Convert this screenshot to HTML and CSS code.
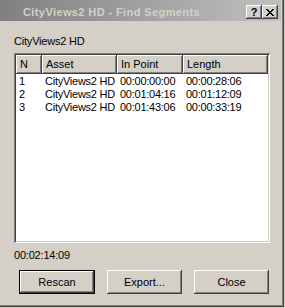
FILE: index.html
```html
<!DOCTYPE html>
<html lang="en">
<head>
  <meta charset="UTF-8" />
  <title>CityViews2 HD - Find Segments</title>
  <link rel="stylesheet" href="styles.css">
</head>
<body>
  <div class="window">
    <div class="titlebar">
      <span class="title">CityViews2 HD - Find Segments</span>
      <div class="caption-btns">
        <div class="cap-btn help">?</div>
        <div class="cap-btn">
          <svg width="8" height="7" viewBox="0 0 8 7"><path d="M0 0h2v1h-2zM6 0h2v1h-2zM1 1h2v1h-2zM5 1h2v1h-2zM2 2h4v1h-4zM3 3h2v1h-2zM2 4h4v1h-4zM1 5h2v1h-2zM5 5h2v1h-2zM0 6h2v1h-2zM6 6h2v1h-2z" fill="#000"/></svg>
        </div>
      </div>
    </div>

    <div class="content">
      <div class="label">CityViews2 HD</div>

      <div class="listview">
        <div class="row header">
          <div class="col c-n">N</div>
          <div class="col c-asset">Asset</div>
          <div class="col c-in">In Point</div>
          <div class="col c-len">Length</div>
        </div>
        <div class="row">
          <div class="col c-n">1</div>
          <div class="col c-asset">CityViews2 HD</div>
          <div class="col c-in">00:00:00:00</div>
          <div class="col c-len">00:00:28:06</div>
        </div>
        <div class="row">
          <div class="col c-n">2</div>
          <div class="col c-asset">CityViews2 HD</div>
          <div class="col c-in">00:01:04:16</div>
          <div class="col c-len">00:01:12:09</div>
        </div>
        <div class="row">
          <div class="col c-n">3</div>
          <div class="col c-asset">CityViews2 HD</div>
          <div class="col c-in">00:01:43:06</div>
          <div class="col c-len">00:00:33:19</div>
        </div>
      </div>

      <div class="total">00:02:14:09</div>

      <div class="buttons">
        <button class="btn default">Rescan</button>
        <button class="btn">Export...</button>
        <button class="btn">Close</button>
      </div>
    </div>
  </div>
</body>
</html>
```

FILE: styles.css
```css
body { margin: 0; background: #d4d0c8; font-family: "Liberation Sans", Arial, sans-serif; font-size: 11px; color: #000; }

.window { width: 284px; height: 307px; box-sizing: border-box; border-right: 1px solid #404040; border-bottom: 1px solid #404040; box-shadow: inset -1px -1px #808080; }

.titlebar { width: 281px; height: 21px; display: flex; align-items: center; padding-left: 23px; box-sizing: border-box; background: linear-gradient(to right, #808080, #c0c0c0); }
.title { font-weight: bold; font-size: 11px; color: #d4d0c8; padding-top: 3px; letter-spacing: 0.4px; }
.caption-btns { display: flex; margin-left: auto; margin-right: 3px; align-self: flex-start; margin-top: 5px; }
.cap-btn { width: 16px; height: 14px; box-sizing: border-box; background: #d4d0c8; display: flex; align-items: center; justify-content: center;
  box-shadow: inset -1px -1px #404040, inset 1px 1px #fff, inset -2px -2px #808080; }
.cap-btn.help { font-weight: bold; font-size: 11px; line-height: 14px; }

.content { padding: 14px 0 0 14px; }
.label { line-height: 13px; letter-spacing: -0.2px; }

.listview { margin-top: 5px; width: 256px; height: 190px; box-sizing: border-box; background: #fff; padding: 2px;
  box-shadow: inset 1px 1px #808080, inset -1px -1px #fff, inset 2px 2px #404040, inset -2px -2px #d4d0c8; }
.row { display: flex; height: 13px; line-height: 13px; letter-spacing: -0.25px; }
.row .col { box-sizing: border-box; padding-left: 3px; white-space: nowrap; overflow: hidden; }
.row.header { height: 19px; line-height: 18px; letter-spacing: 0; }
.row.header .col { background: #d4d0c8; padding-left: 4px; box-shadow: inset -1px -1px #404040, inset 1px 1px #fff, inset -2px -2px #808080; }
.c-n { width: 26px; }
.c-asset { width: 75px; }
.c-in { width: 66px; }
.c-len { width: 85px; }
.row:nth-child(2) { margin-top: 1px; }

.total { margin-top: 6px; line-height: 13px; letter-spacing: -0.2px; }

.buttons { display: flex; gap: 12px; margin-top: 8px; padding-left: 5px; }
.btn { width: 75px; height: 24px; font-family: inherit; font-size: 11px; color: #000; background: #d4d0c8; border: none; padding: 0;
  box-shadow: inset -1px -1px #404040, inset 1px 1px #fff, inset -2px -2px #808080; }
.btn.default { width: 76px; border: 1px solid #000; }
```
